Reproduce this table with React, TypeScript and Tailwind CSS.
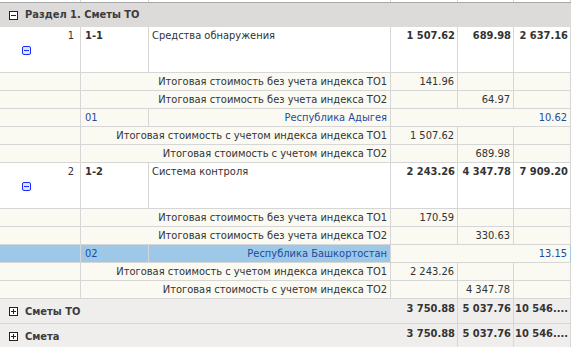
import React from "react";

const GRID = "grid grid-cols-[81px_68px_242px_67px_56px_57px]";
const LINE = "border-[#d6d6d6]";

function MinusBox() {
  return (
    <span className="inline-block w-[9px] h-[9px] border border-[#222] bg-white relative">
      <span className="absolute left-[1px] right-[1px] top-[3px] h-[1px] bg-[#222]" />
    </span>
  );
}

function PlusBox() {
  return (
    <span className="inline-block w-[9px] h-[9px] border border-[#222] bg-white relative">
      <span className="absolute left-[1px] right-[1px] top-[3px] h-[1px] bg-[#222]" />
      <span className="absolute top-[1px] bottom-[1px] left-[3px] w-[1px] bg-[#222]" />
    </span>
  );
}

function BlueMinus() {
  return (
    <span className="inline-block w-[9px] h-[9px] border border-[#1a2cff] rounded-[2px] bg-[#dfe6ff] relative">
      <span className="absolute left-[1px] right-[1px] top-[3px] h-[1px] bg-[#1a2cff]" />
    </span>
  );
}

type Item = {
  n: string;
  code: string;
  name: string;
  v: [string, string, string];
  wo1: string;
  wo2: string;
  regCode: string;
  region: string;
  regVal: string;
  w1: string;
  w2: string;
  w1label: string;
  selected?: boolean;
};

const items: Item[] = [
  {
    n: "1",
    code: "1-1",
    name: "Средства обнаружения",
    v: ["1 507.62", "689.98", "2 637.16"],
    wo1: "141.96",
    wo2: "64.97",
    regCode: "01",
    region: "Республика Адыгея",
    regVal: "10.62",
    w1: "1 507.62",
    w2: "689.98",
    w1label: "Итоговая стоимость с учетом индекса индекса ТО1",
  },
  {
    n: "2",
    code: "1-2",
    name: "Система контроля",
    v: ["2 243.26", "4 347.78", "7 909.20"],
    wo1: "170.59",
    wo2: "330.63",
    regCode: "02",
    region: "Республика Башкортостан",
    regVal: "13.15",
    w1: "2 243.26",
    w2: "4 347.78",
    w1label: "Итоговая стоимость с учетом индекса индекса ТО1",
    selected: true,
  },
];

function SubRow({ label, a, b }: { label: string; a?: string; b?: string }) {
  return (
    <div className={`${GRID} h-[18px] bg-[#faf9f2] border-b ${LINE}`}>
      <div className={`border-r ${LINE}`} />
      <div className={`col-span-2 border-r ${LINE} text-right pr-[3px] leading-[17px] whitespace-nowrap overflow-hidden`}>
        {label}
      </div>
      <div className={`border-r ${LINE} text-right pr-[3px] leading-[17px]`}>{a}</div>
      <div className={`border-r ${LINE} text-right pr-[3px] leading-[17px]`}>{b}</div>
      <div className={`border-r ${LINE}`} />
    </div>
  );
}

function ItemBlock({ it }: { it: Item }) {
  const sel = it.selected;
  const regBg = sel ? "bg-[#9dc8e8]" : "bg-[#faf9f2]";
  return (
    <>
      <div className={`${GRID} h-[46px] bg-white border-b ${LINE}`}>
        <div className={`border-r ${LINE} flex flex-col`}>
          <div className="text-right pr-[6px] pt-[2px] leading-[14px]">{it.n}</div>
          <div className="pl-[22px] pt-[3px] flex">
            <BlueMinus />
          </div>
        </div>
        <div className={`border-r ${LINE} pl-[4px] pt-[2px] leading-[14px] font-bold`}>{it.code}</div>
        <div className={`border-r ${LINE} pl-[3px] pt-[2px] leading-[14px]`}>{it.name}</div>
        <div className={`border-r ${LINE} text-right pr-[2px] pt-[2px] leading-[14px] font-bold whitespace-nowrap`}>{it.v[0]}</div>
        <div className={`border-r ${LINE} text-right pr-[2px] pt-[2px] leading-[14px] font-bold whitespace-nowrap`}>{it.v[1]}</div>
        <div className={`border-r ${LINE} text-right pr-[2px] pt-[2px] leading-[14px] font-bold whitespace-nowrap`}>{it.v[2]}</div>
      </div>
      <SubRow label="Итоговая стоимость без учета индекса ТО1" a={it.wo1} />
      <SubRow label="Итоговая стоимость без учета индекса ТО2" b={it.wo2} />
      <div className={`${GRID} h-[18px] border-b ${LINE} text-[#1e4c9c]`}>
        <div className={`border-r ${LINE} ${regBg}`} />
        <div className={`border-r ${LINE} ${regBg} pl-[4px] leading-[17px]`}>{it.regCode}</div>
        <div className={`border-r ${LINE} ${regBg} text-right pr-[3px] leading-[17px]`}>{it.region}</div>
        <div className={`col-span-3 border-r ${sel ? "border-[#9dc8e8]" : LINE} bg-[#faf9f2] text-right pr-[3px] leading-[17px]`}>
          {it.regVal}
        </div>
      </div>
      <SubRow label={it.w1label} a={it.w1} />
      <SubRow label="Итоговая стоимость с учетом индекса ТО2" b={it.w2} />
    </>
  );
}

function FooterRow({ label }: { label: string }) {
  return (
    <div className={`${GRID} h-[25px] bg-[#efeeec] border-b ${LINE} font-bold`}>
      <div className="col-span-3 flex items-center pl-[9px] gap-[7px] leading-[14px] pt-[1px]">
        <PlusBox />
        <span className="text-[#3c3c3c]">{label}</span>
      </div>
      <div className={`border-r ${LINE} text-right pr-[2px] pt-[3px] leading-[14px] whitespace-nowrap`}>3 750.88</div>
      <div className={`border-r ${LINE} text-right pr-[2px] pt-[3px] leading-[14px] whitespace-nowrap`}>5 037.76</div>
      <div className={`border-r ${LINE} text-right pr-[2px] pt-[3px] leading-[14px] whitespace-nowrap`}>10 546....</div>
    </div>
  );
}

export default function App() {
  return (
    <div
      className="w-[571px] h-[347px] overflow-hidden bg-white text-[11px] text-[#333]"
      style={{ fontFamily: '"DejaVu Sans Condensed", "DejaVu Sans", sans-serif' }}
    >
      <div className={`${GRID} h-[3px] bg-white border-b border-[#a9a9a9]`}>
        <div className={`border-r ${LINE}`} />
        <div className={`border-r ${LINE}`} />
        <div className={`border-r ${LINE}`} />
        <div className={`border-r ${LINE}`} />
        <div className={`border-r ${LINE}`} />
        <div className={`border-r ${LINE}`} />
      </div>
      <div className="h-[24px] bg-[#dcdbd9] flex items-center pl-[9px] gap-[7px] font-bold text-[#3c3c3c] pt-[1px]">
        <MinusBox />
        <span>Раздел 1. Сметы ТО</span>
      </div>
      {items.map((it) => (
        <ItemBlock key={it.n} it={it} />
      ))}
      <FooterRow label="Сметы ТО" />
      <FooterRow label="Смета" />
    </div>
  );
}
